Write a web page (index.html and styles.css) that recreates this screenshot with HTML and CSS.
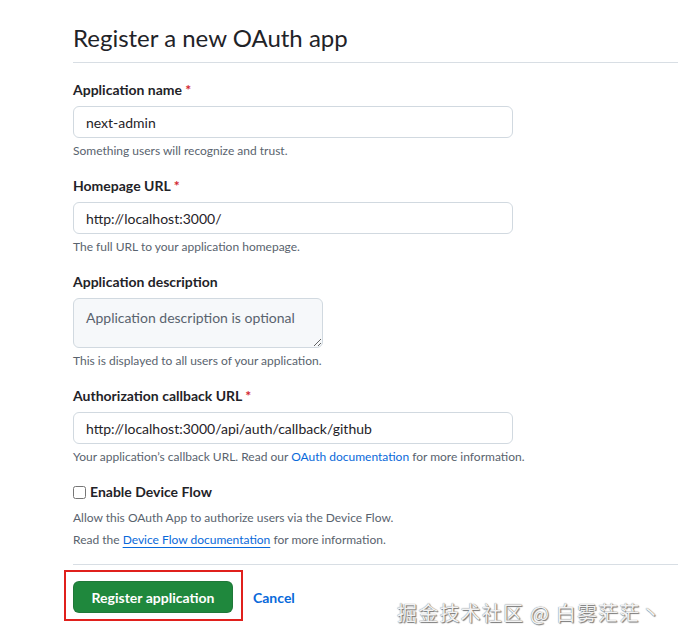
FILE: index.html
```html
<!DOCTYPE html>
<html>
  <head>
    <meta charset="utf-8">
    <title>Register a new OAuth app</title>
    <link rel="stylesheet" href="styles.css">
  </head>
  <body>
    <div class="page">
      <div class="subhead">
        <h2>Register a new OAuth app</h2>
      </div>

      <form class="app-form">
        <div class="form-group">
          <label class="form-label" for="name">Application name <span class="req">*</span></label>
          <input class="form-control" id="name" type="text" value="next-admin">
          <p class="note">Something users will recognize and trust.</p>
        </div>

        <div class="form-group">
          <label class="form-label" for="url">Homepage URL <span class="req">*</span></label>
          <input class="form-control" id="url" type="text" value="http://localhost:3000/">
          <p class="note">The full URL to your application homepage.</p>
        </div>

        <div class="form-group">
          <label class="form-label" for="desc">Application description</label>
          <textarea class="form-control textarea" id="desc" placeholder="Application description is optional"></textarea>
          <p class="note">This is displayed to all users of your application.</p>
        </div>

        <div class="form-group">
          <label class="form-label" for="callback">Authorization callback URL <span class="req">*</span></label>
          <input class="form-control" id="callback" type="text" value="http://localhost:3000/api/auth/callback/github">
          <p class="note">Your application’s callback URL. Read our <a href="#">OAuth documentation</a> for more information.</p>
        </div>

        <div class="form-group check-group">
          <label class="check-label"><input type="checkbox" class="check"> Enable Device Flow</label>
          <p class="note">Allow this OAuth App to authorize users via the Device Flow.</p>
          <p class="note">Read the <a href="#" class="underlined">Device Flow documentation</a> for more information.</p>
        </div>

        <hr class="divider">

        <div class="actions">
          <div class="highlight">
            <button type="button" class="btn-primary">Register application</button>
          </div>
          <a href="#" class="cancel">Cancel</a>
        </div>
      </form>
    </div>

    <div class="watermark">掘金技术社区 @ 白雾茫茫丶</div>
  </body>
</html>
```

FILE: styles.css
```css
html, body {
  overflow: hidden;
}
body {
  margin: 0;
  background: #fff;
  color: #1f2328;
  font-family: Lato, "Noto Sans", sans-serif;
  font-size: 14px;
  line-height: 1.5;
}
.page {
  padding: 20px 0 0 73px;
}
.subhead {
  border-bottom: 1px solid #d8dee4;
  padding-bottom: 6px;
  margin-bottom: 17px;
}
.subhead h2 {
  margin: 0;
  font-size: 24px;
  font-weight: 400;
  line-height: 36px;
}
.app-form {
  width: 605px;
}
.form-group {
  margin-bottom: 16px;
}
.form-label {
  display: block;
  font-weight: 700;
  line-height: 20px;
  margin-bottom: 6px;
}
.req {
  color: #d1242f;
}
.form-control {
  display: block;
  box-sizing: border-box;
  width: 440px;
  height: 32px;
  padding: 5px 12px;
  font: inherit;
  font-size: 14px;
  color: #1f2328;
  border: 1px solid #d1d9e0;
  border-radius: 6px;
  background: #fff;
}
.textarea {
  width: 250px;
  height: 50px;
  padding: 8px 12px;
  background: #f6f8fa;
  resize: both;
}
.textarea::placeholder {
  color: #59636e;
}
.note {
  margin: 4px 0 0;
  font-size: 12px;
  line-height: 18px;
  color: #59636e;
}
.note a {
  color: #0969da;
  text-decoration: none;
}
.note a.underlined {
  text-decoration: underline;
  text-underline-offset: 3px;
}
.check-group {
  margin-bottom: 15px;
}
.check-label {
  display: flex;
  align-items: center;
  gap: 4px;
  font-weight: 700;
  line-height: 20px;
  margin-bottom: 7px;
}
.check {
  width: 13px;
  height: 13px;
  margin: 0;
}
.check-group .note + .note {
  margin-top: 4px;
}
.divider {
  border: 0;
  border-top: 1px solid #d8dee4;
  margin: 0 0 5px;
}
.actions {
  display: flex;
  align-items: center;
  gap: 10px;
  margin-left: -9px;
}
.highlight {
  border: 2px solid #e0201c;
  padding: 9px 8px 6px 7px;
}
.btn-primary {
  display: block;
  width: 160px;
  height: 32px;
  border: 1px solid rgba(31, 35, 40, 0.15);
  border-radius: 6px;
  background: #1f883d;
  color: #fff;
  font: inherit;
  font-weight: 700;
  font-size: 14px;
}
.cancel {
  color: #0969da;
  font-weight: 700;
  text-decoration: none;
  margin-top: 4px;
}
.watermark {
  position: absolute;
  left: 397px;
  top: 598px;
  font-family: "Noto Sans CJK SC", sans-serif;
  font-size: 20px;
  color: #f2f2f2;
  text-shadow: 0 0 1px #666, 1px 1px 1px #777;
  letter-spacing: 1.2px;
}
```
